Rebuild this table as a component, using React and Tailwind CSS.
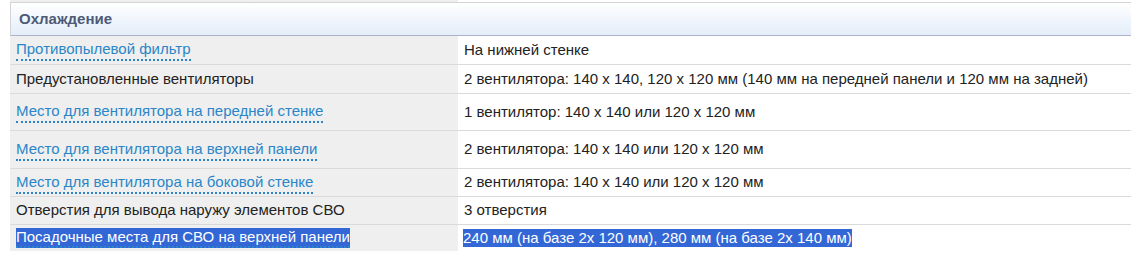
import React from 'react';

const rows = [
  { name: 'Противопылевой фильтр', value: 'На нижней стенке', link: true, h: 'h-[29px]' },
  { name: 'Предустановленные вентиляторы', value: '2 вентилятора: 140 x 140, 120 x 120 мм (140 мм на передней панели и 120 мм на задней)', h: 'h-[29px]' },
  { name: 'Место для вентилятора на передней стенке', value: '1 вентилятор: 140 x 140 или 120 x 120 мм', link: true, h: 'h-[37px]' },
  { name: 'Место для вентилятора на верхней панели', value: '2 вентилятора: 140 x 140 или 120 x 120 мм', link: true, h: 'h-[38px]' },
  { name: 'Место для вентилятора на боковой стенке', value: '2 вентилятора: 140 x 140 или 120 x 120 мм', link: true, h: 'h-[28px]' },
  { name: 'Отверстия для вывода наружу элементов СВО', value: '3 отверстия', h: 'h-[28px]' },
];

const App = () => {
  return (
    <div className="w-[1131px] h-[262px] overflow-hidden bg-white pl-[10px] font-['Liberation_Sans',Arial,sans-serif] text-[15px] text-[#222]">
      <div className="grid grid-cols-[448px_1fr]">
        {/* tail of previous row */}
        <div className="h-[2px] bg-[#efefef]" />
        <div className="h-[2px] bg-white" />

        {/* section header */}
        <div className="col-span-2 h-[34px] flex items-center pl-[8px] border-t border-l border-[#d4d4d4] border-b border-b-[#aab4c6] bg-gradient-to-b from-white to-[#e4edf9]">
          <span className="font-bold text-[#4d5a78]">Охлаждение</span>
        </div>

        {rows.map((r) => (
          <React.Fragment key={r.name}>
            <div className={`${r.h} flex items-center px-[6px] bg-[#efefef] border-b border-[#dadada]`}>
              {r.link ? (
                <span className="text-[#2a86c8] border-b-2 border-dotted border-[#2a86c8] leading-[20px]">{r.name}</span>
              ) : (
                <span>{r.name}</span>
              )}
            </div>
            <div className={`${r.h} flex items-center px-[6px] bg-white border-b border-[#dadada]`}>
              <span>{r.value}</span>
            </div>
          </React.Fragment>
        ))}

        <div className="h-[26px] flex items-center px-[6px] bg-[#efefef]">
          <span className="bg-[#3367d6] text-white border-b-2 border-dotted border-[#2a86c8] leading-[18px]">Посадочные места для СВО на верхней панели</span>
        </div>
        <div className="h-[26px] flex items-center px-[5px] bg-white">
          <span className="bg-[#3367d6] text-white leading-[18px]">240 мм (на базе 2х 120 мм), 280 мм (на базе 2х 140 мм)</span>
        </div>
      </div>
    </div>
  );
};

export default App;
